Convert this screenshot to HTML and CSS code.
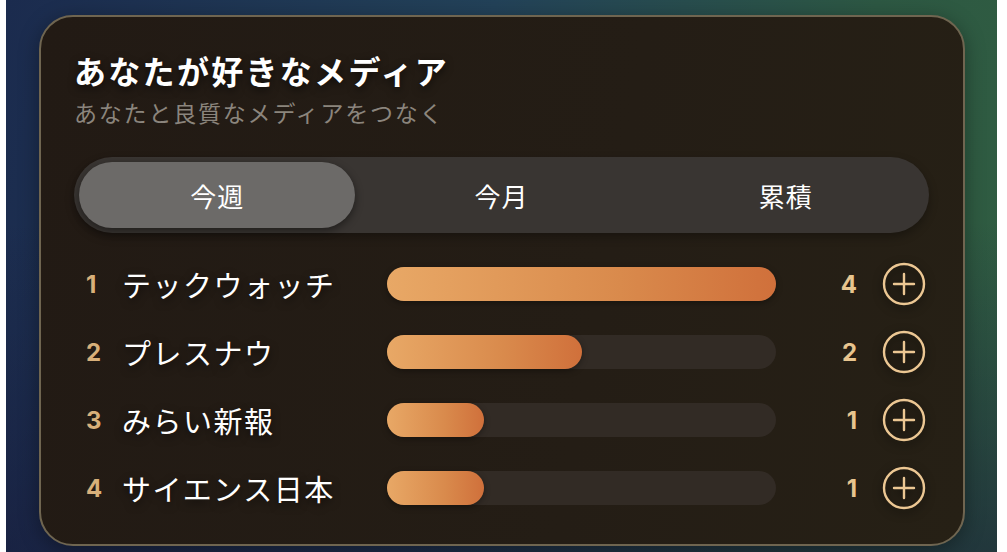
FILE: index.html
```html
<!DOCTYPE html>
<html lang="ja">
<head>
    <meta charset="UTF-8">
    <title>あなたが好きなメディア</title>
    <link rel="stylesheet" href="styles.css">
</head>
<body>
<div class="scene">
    <div class="card">
        <h1 class="title">あなたが好きなメディア</h1>
        <p class="subtitle">あなたと良質なメディアをつなく</p>

        <div class="tabs">
            <div class="tab active">今週</div>
            <div class="tab">今月</div>
            <div class="tab">累積</div>
        </div>

        <ul class="rank-list">
            <li class="rank-row">
                <span class="rank">1</span>
                <span class="name">テックウォッチ</span>
                <div class="bar"><div class="fill" style="width:100%"></div></div>
                <span class="count">4</span>
                <button class="add"><svg viewBox="0 0 44 44"><circle cx="22" cy="22" r="20"/><path d="M22 12v20M12 22h20"/></svg></button>
            </li>
            <li class="rank-row">
                <span class="rank">2</span>
                <span class="name">プレスナウ</span>
                <div class="bar"><div class="fill" style="width:50%"></div></div>
                <span class="count">2</span>
                <button class="add"><svg viewBox="0 0 44 44"><circle cx="22" cy="22" r="20"/><path d="M22 12v20M12 22h20"/></svg></button>
            </li>
            <li class="rank-row">
                <span class="rank">3</span>
                <span class="name">みらい新報</span>
                <div class="bar"><div class="fill" style="width:25%"></div></div>
                <span class="count">1</span>
                <button class="add"><svg viewBox="0 0 44 44"><circle cx="22" cy="22" r="20"/><path d="M22 12v20M12 22h20"/></svg></button>
            </li>
            <li class="rank-row">
                <span class="rank">4</span>
                <span class="name">サイエンス日本</span>
                <div class="bar"><div class="fill" style="width:25%"></div></div>
                <span class="count">1</span>
                <button class="add"><svg viewBox="0 0 44 44"><circle cx="22" cy="22" r="20"/><path d="M22 12v20M12 22h20"/></svg></button>
            </li>
        </ul>
    </div>
</div>
</body>
</html>
```

FILE: styles.css
```css
*{
    margin: 0;
    padding: 0;
    box-sizing: border-box;
}
body{
    background: #fff;
    font-family: "Noto Sans CJK JP", "Noto Sans", sans-serif;
    color: #fff;
}
/* 背景のグラデーション */
.scene{
    margin-left: 6px;
    width: 991px;
    height: 552px;
    padding: 15px 32px 6px 33px;
    background:
        linear-gradient(180deg, rgba(20,20,50,0) 40%, rgba(22,24,56,.55) 100%),
        linear-gradient(100deg, #1b2b4e 0%, #234259 45%, #2d5843 80%, #305d41 100%);
}
.card{
    height: 531px;
    border: 2px solid #6f6550;
    border-radius: 34px;
    background: linear-gradient(100deg, #221a14 0%, #241d15 60%, #262015 100%);
    padding: 33px 34px 0 33px;
    box-shadow: 0 4px 20px rgba(0,0,0,.35);
}
.title{
    font-size: 32px;
    font-weight: 700;
    letter-spacing: 2.3px;
    line-height: 40px;
    text-shadow: 0 3px 8px rgba(0,0,0,.6);
}
.subtitle{
    font-size: 23px;
    letter-spacing: 1.8px;
    line-height: 32px;
    color: #8b857d;
    margin-top: 6px;
}
/* タブ */
.tabs{
    margin-top: 29px;
    height: 76px;
    padding: 5px;
    border-radius: 38px;
    background: #393532;
    display: grid;
    grid-template-columns: repeat(3, 1fr);
    gap: 8px;
    box-shadow: 0 4px 10px rgba(0,0,0,.3);
}
.tab{
    display: flex;
    align-items: center;
    justify-content: center;
    font-size: 26px;
    letter-spacing: 1px;
    border-radius: 33px;
}
.tab.active{
    background: #6c6a68;
    box-shadow: 0 3px 8px rgba(0,0,0,.45);
}
/* ランキング */
.rank-list{
    list-style: none;
    margin-top: 17px;
}
.rank-row{
    height: 68px;
    display: flex;
    align-items: center;
}
.rank{
    width: 48px;
    padding-left: 12px;
    font-family: "Inter", "Noto Sans", sans-serif;
    font-weight: 700;
    font-size: 24px;
    color: #d8b07a;
}
.name{
    width: 265px;
    font-size: 29px;
    letter-spacing: 1.5px;
    text-shadow: 0 3px 8px rgba(0,0,0,.6);
}
.bar{
    width: 389px;
    height: 34px;
    border-radius: 17px;
    background: #322b25;
}
.fill{
    height: 100%;
    border-radius: 17px;
    background: linear-gradient(90deg, #e8a866 0%, #d98a4c 60%, #d0703b 100%);
    box-shadow: 0 2px 6px rgba(0,0,0,.35);
}
.count{
    width: 81px;
    text-align: right;
    font-family: "Inter", "Noto Sans", sans-serif;
    font-weight: 700;
    font-size: 24px;
    color: #e8c58f;
}
.add{
    margin-left: 25px;
    width: 44px;
    height: 44px;
    border: 0;
    background: none;
    cursor: pointer;
}
.add svg{
    width: 44px;
    height: 44px;
    display: block;
    fill: none;
    stroke: #ecc793;
    stroke-width: 2.4;
    stroke-linecap: round;
    filter: drop-shadow(0 3px 5px rgba(0,0,0,.6));
}
```
